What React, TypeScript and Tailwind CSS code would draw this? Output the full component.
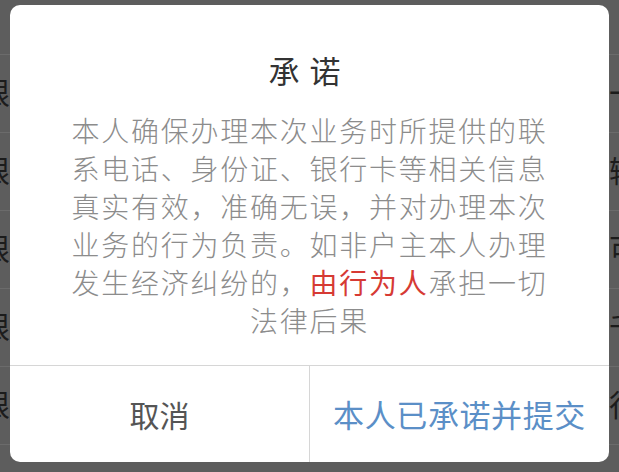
const ROWS = [
  { left: "", right: "" },
  { left: "限", right: "一" },
  { left: "限", right: "输" },
  { left: "限", right: "可" },
  { left: "限", right: "千" },
  { left: "限", right: "行" },
  { left: "", right: "" },
];

const LINES: { text: string; red?: string; after?: string }[] = [
  { text: "本人确保办理本次业务时所提供的联" },
  { text: "系电话、身份证、银行卡等相关信息" },
  { text: "真实有效，准确无误，并对办理本次" },
  { text: "业务的行为负责。如非户主本人办理" },
  { text: "发生经济纠纷的，", red: "由行为人", after: "承担一切" },
  { text: "法律后果" },
];

export default function App() {
  return (
    <div
      className="relative h-[472px] w-[619px] overflow-hidden bg-[#5d5d5d]"
      style={{ fontFamily: '"Noto Sans CJK SC", "Noto Sans", sans-serif' }}
    >
      {/* dimmed list behind the dialog */}
      <div className="-mt-[23px] flex flex-col">
        {ROWS.map((row, i) => (
          <div
            key={i}
            className="flex h-[78px] items-center justify-between border-b border-[#6b6b6b] pb-[6px] text-[30px] leading-[40px] text-[#1c1c1c]"
          >
            <span className="-ml-[20px]">{row.left}</span>
            <span className="-mr-[20px]">{row.right}</span>
          </div>
        ))}
      </div>

      {/* dialog */}
      <div className="absolute left-[10px] top-[5px] flex h-[457px] w-[599px] flex-col rounded-[10px] bg-white">
        <div className="pt-[45px] text-center text-[31px] leading-[40px] tracking-[10px] text-[#333]">
          承诺
        </div>
        <div className="mt-[21px] flex-1 text-center text-[28px] font-light leading-[38px] tracking-[1.75px] text-[#8c8c8c]">
          {LINES.map((line, i) => (
            <div key={i} className="whitespace-nowrap">
              {line.text}
              {line.red && <span className="font-normal text-[#d63a34]">{line.red}</span>}
              {line.after}
            </div>
          ))}
        </div>
        <div className="flex h-[97px] border-t border-[#d6d6d6]">
          <button className="flex flex-1 items-center justify-center text-[30px] text-[#555]">
            取消
          </button>
          <button className="flex flex-1 items-center justify-center border-l border-[#d6d6d6] text-[31px] tracking-[0.6px] text-[#5b8fc7]">
            本人已承诺并提交
          </button>
        </div>
      </div>
    </div>
  );
}
